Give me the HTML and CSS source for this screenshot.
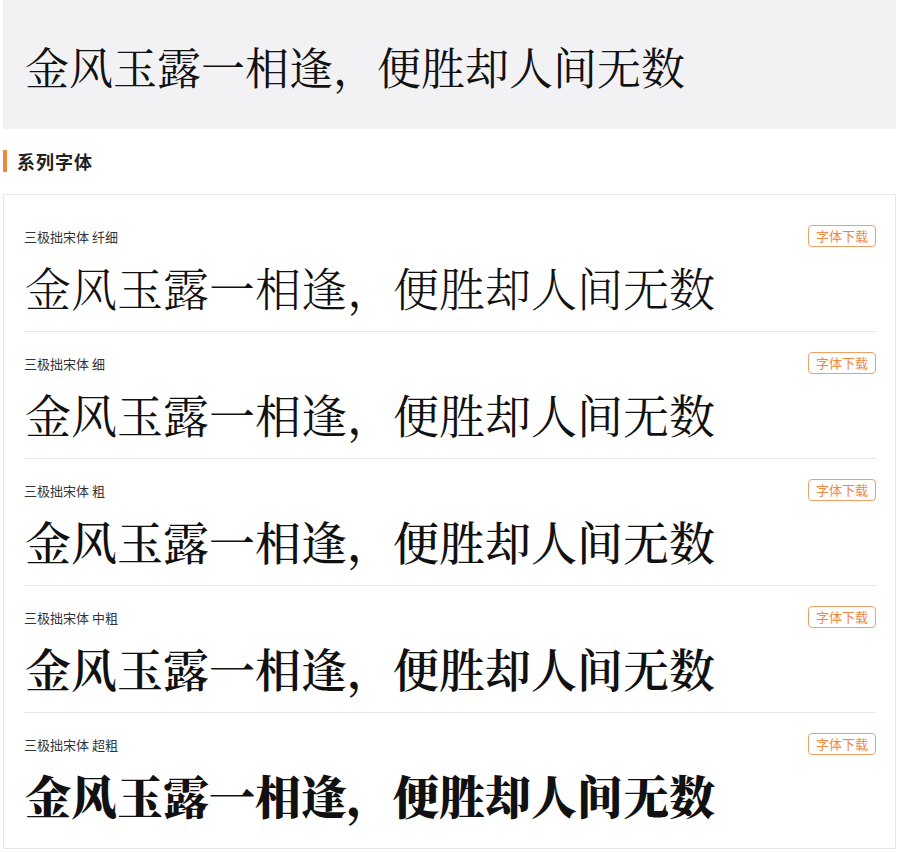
FILE: index.html
```html
<!DOCTYPE html>
<html lang="zh">
<head>
<meta charset="utf-8">
<link rel="stylesheet" href="styles.css">
</head>
<body>
<div class="page">
  <div class="hero">
    <p class="hero-text">金风玉露一相逢，便胜却人间无数</p>
  </div>
  <h2 class="section-title">系列字体</h2>
  <div class="card">
    <div class="row">
      <div class="row-head"><span class="name">三极拙宋体 纤细</span><span class="btn">字体下载</span></div>
      <p class="sample w300">金风玉露一相逢，便胜却人间无数</p>
    </div>
    <div class="row">
      <div class="row-head"><span class="name">三极拙宋体 细</span><span class="btn">字体下载</span></div>
      <p class="sample w400">金风玉露一相逢，便胜却人间无数</p>
    </div>
    <div class="row">
      <div class="row-head"><span class="name">三极拙宋体 粗</span><span class="btn">字体下载</span></div>
      <p class="sample w500">金风玉露一相逢，便胜却人间无数</p>
    </div>
    <div class="row">
      <div class="row-head"><span class="name">三极拙宋体 中粗</span><span class="btn">字体下载</span></div>
      <p class="sample w600">金风玉露一相逢，便胜却人间无数</p>
    </div>
    <div class="row">
      <div class="row-head"><span class="name">三极拙宋体 超粗</span><span class="btn">字体下载</span></div>
      <p class="sample w900">金风玉露一相逢，便胜却人间无数</p>
    </div>
  </div>
</div>
</body>
</html>
```
FILE: styles.css
```css
* { box-sizing: border-box; }
html, body { margin: 0; padding: 0; background: #fff; }
body {
  font-family: "Noto Sans CJK SC", "Noto Sans", sans-serif;
  color: #222;
}
.page { padding: 0 4px 0 3px; }
.hero {
  height: 129px;
  background: #f2f2f4;
  display: flex;
  align-items: center;
  padding: 3px 22px 0;
}
.hero-text, .sample {
  margin: 0;
  font-family: "Noto Serif CJK SC", "Source Han Serif SC", "Noto Sans CJK SC", serif;
  color: #111;
  white-space: nowrap;
}
.hero-text { font-size: 44px; line-height: 60px; font-weight: 400; }
.section-title {
  margin: 21px 0 0;
  height: 22px;
  line-height: 22px;
  font-size: 18px;
  letter-spacing: 1px;
  font-weight: 700;
  color: #222;
  border-left: 4px solid #f0883e;
  padding-left: 10px;
}
.card {
  margin-top: 22px;
  border: 1px solid #e6e6e6;
  padding: 10px 19px 9px 20px;
}
.row { border-bottom: 1px solid #e8e8e8; padding: 20px 0 13px; }
.row:last-child { border-bottom: none; }
.row-head {
  display: flex;
  justify-content: space-between;
  align-items: center;
  height: 22px;
}
.name { font-size: 13px; color: #333; }
.btn {
  font-size: 13px;
  color: #f0883e;
  border: 1px solid #f0a066;
  border-radius: 4px;
  height: 22px;
  line-height: 20px;
  padding: 0 7px;
}
.sample {
  font-size: 46px;
  line-height: 64px;
  margin-top: 7px;
  padding-left: 1px;
}
.w300 { font-weight: 300; }
.w400 { font-weight: 400; }
.w500 { font-weight: 500; }
.w600 { font-weight: 600; }
.w900 { font-weight: 900; }
```
